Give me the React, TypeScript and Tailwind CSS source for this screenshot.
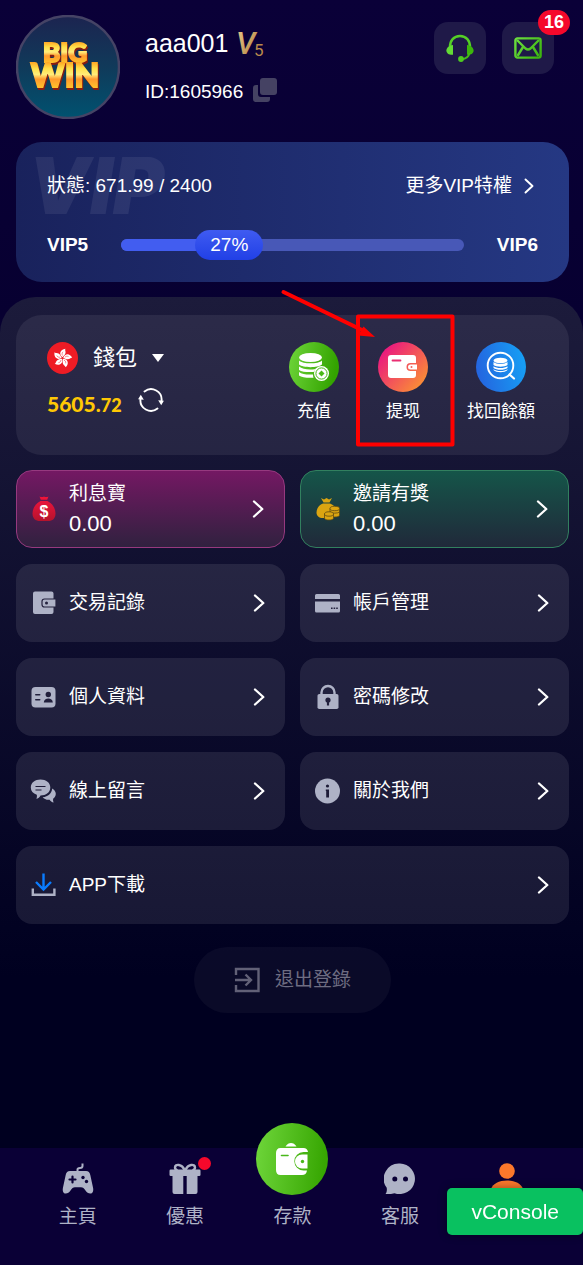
import { useState } from "react";
import type { ReactNode } from "react";

const FONT = "font-['Liberation_Sans','Noto_Sans_CJK_TC',sans-serif]";

function Chevron() {
  return (
    <svg width="12" height="19" viewBox="0 0 12 19" fill="none" className="shrink-0">
      <path d="M2 1.500l8.300 7.500L2 16.500" stroke="#fff" strokeWidth="2.300" strokeLinecap="round" strokeLinejoin="round" />
    </svg>
  );
}

function BigWinLogo() {
  return (
    <svg width="104" height="104" viewBox="0 0 104 104" className="shrink-0">
      <defs>
        <linearGradient id="avatarBg" x1="0" y1="0" x2="0" y2="1">
          <stop offset="0" stopColor="#1c2450" />
          <stop offset="0.5" stopColor="#103a5a" />
          <stop offset="1" stopColor="#005270" />
        </linearGradient>
        <linearGradient id="gold" x1="0" y1="0" x2="0" y2="1">
          <stop offset="0.15" stopColor="#ff9a1c" />
          <stop offset="0.35" stopColor="#ffe14a" />
          <stop offset="0.5" stopColor="#ffec7a" />
          <stop offset="0.62" stopColor="#ff9a2e" />
          <stop offset="0.85" stopColor="#ffc42b" />
        </linearGradient>
      </defs>
      <circle cx="52" cy="52" r="51" fill="url(#avatarBg)" stroke="#454365" strokeWidth="2.500" />
      <g
        fontFamily="Lato, sans-serif"
        fontWeight="900"
        textAnchor="middle"
        fill="url(#gold)"
        stroke="url(#gold)"
        strokeWidth="2"
        className="drop-shadow-[1px_2px_0_#8a1d10]"
      >
        <text x="49" y="47" fontSize="26">BIG</text>
        <text x="49" y="72" fontSize="32">WIN</text>
      </g>
    </svg>
  );
}

function LevelMark() {
  return (
    <svg width="30" height="30" viewBox="0 0 30 30">
      <defs>
        <linearGradient id="bronze" x1="0" y1="0" x2="1" y2="1">
          <stop offset="0" stopColor="#efce8f" />
          <stop offset="1" stopColor="#a87836" />
        </linearGradient>
      </defs>
      <text x="0" y="26" fontSize="31" fontWeight="500" fontStyle="italic" fontFamily="Roboto, sans-serif" fill="url(#bronze)">V</text>
      <text x="18" y="28" fontSize="17" fontFamily="Roboto, sans-serif" fill="#b98a4c">5</text>
    </svg>
  );
}

function CopyIcon() {
  return (
    <svg width="24" height="25" viewBox="0 0 24 25" fill="#454263">
      <rect x="7" y="0" width="17" height="17" rx="3" />
      <path d="M5 7H3a3 3 0 0 0-3 3v11a3 3 0 0 0 3 3h11a3 3 0 0 0 3-3v-2H8a3 3 0 0 1-3-3z" />
    </svg>
  );
}

function HeadsetIcon() {
  return (
    <svg width="28" height="28" viewBox="0 0 28 28">
      <path d="M4 13.500C3.600 6.500 8 2 14 2s10.400 4.500 10 11.500" fill="none" stroke="#55cf26" strokeWidth="2.400" />
      <path d="M7 11v9.700C3 21 .4 19.200.4 16.400c0-2.300 2.400-5 6.600-5.400z" fill="#63dc35" />
      <path d="M21 11v9.700c4 .3 6.600-1.500 6.600-4.300 0-2.300-2.400-5-6.600-5.400z" fill="#3cb60c" />
      <path d="M23.500 19c-.6 3.500-3.500 5.800-8 6.300" fill="none" stroke="#45be16" strokeWidth="1.800" />
      <circle cx="15" cy="25" r="2.900" fill="#4ecb20" />
    </svg>
  );
}

function MailIcon() {
  return (
    <svg width="28" height="22" viewBox="0 0 28 22" fill="none" stroke="url(#mailGreen)" strokeWidth="2.400" strokeLinejoin="round">
      <defs>
        <linearGradient id="mailGreen" gradientUnits="userSpaceOnUse" x1="0" y1="0" x2="28" y2="22">
          <stop offset="0" stopColor="#6fe142" />
          <stop offset="1" stopColor="#37b00a" />
        </linearGradient>
      </defs>
      <rect x="1.400" y="1.400" width="25.200" height="19.200" rx="2" />
      <path d="M3 3l8.500 8.500q2.500 2 5 0L25 3M3.500 19l5.500-9M24.500 19L19 10" />
    </svg>
  );
}

function HongKongFlag() {
  return (
    <svg width="31" height="32" viewBox="0 0 31 32">
      <ellipse cx="15.500" cy="16" rx="15.500" ry="16" fill="#ee1c25" />
      {[10, 82, 154, 226, 298].map((angle) => (
        <g key={angle} transform={`rotate(${angle} 15.500 16)`}>
          <path d="M15.300 15.200C11 13 11.500 8 16.800 6.300c-1 2.200 3.200 3.200-1.500 8.900z" fill="#fff" />
          <path d="M15.100 13.500c-1-1.200-1-2.500-.1-3.700" fill="none" stroke="#ee1c25" strokeWidth=".5" />
        </g>
      ))}
    </svg>
  );
}

function RefreshIcon() {
  return (
    <svg width="26" height="24" viewBox="0 0 26 24">
      <g fill="none" stroke="#fff" strokeWidth="1.900" strokeLinecap="round">
        <path d="M6.500 3.500A10.500 10.500 0 0 1 23.500 13" />
        <path d="M19.500 20.500A10.500 10.500 0 0 1 2.500 11" />
      </g>
      <path d="M20.200 12.300l5.700.4-2.700 4.600zM5.800 11.700l-5.700-.4 2.700-4.600z" fill="#fff" />
    </svg>
  );
}

function DepositIcon() {
  return (
    <svg width="50" height="50" viewBox="0 0 50 50">
      <defs>
        <linearGradient id="depositBg" x1="0" x2="1" y1="0" y2="0.200">
          <stop offset="0" stopColor="#70d63b" />
          <stop offset="1" stopColor="#33a300" />
        </linearGradient>
      </defs>
      <circle cx="25" cy="25" r="25" fill="url(#depositBg)" />
      <g fill="#fff">
        <ellipse cx="21.500" cy="15.500" rx="11.500" ry="4.500" />
        <path d="M10 18.500c4 3.800 19 3.800 23 0v4c-4 3.500-19 3.500-23 0z" />
        <path d="M10 24.500c4 3.500 14 3.800 19 1.700-3 1.500-4 3-4.300 3.700-5 .6-12 0-14.700-2z" />
        <path d="M10 30c3 2.300 9 3 14 2.400 0 1.500.3 2.500.6 3.300-6 .5-12-.3-14.600-2.200z" />
        <circle cx="32.500" cy="31.500" r="7.500" />
      </g>
      <circle cx="32.500" cy="31.500" r="5.600" fill="none" stroke="#48b816" strokeWidth="1" />
      <path d="M32.500 28.500l3 3-3 3-3-3z" fill="#48b816" />
    </svg>
  );
}

function WithdrawIcon() {
  return (
    <svg width="50" height="50" viewBox="0 0 50 50">
      <defs>
        <linearGradient id="withdrawBg" x1="0.100" y1="0.200" x2="0.900" y2="0.900">
          <stop offset="0" stopColor="#ea1a7e" />
          <stop offset="1" stopColor="#fb9233" />
        </linearGradient>
      </defs>
      <circle cx="25" cy="25" r="25" fill="url(#withdrawBg)" />
      <path d="M13 13h22a3 3 0 0 1 3 3v5h-5.500a4 4 0 0 0 0 8H38v4a3 3 0 0 1-3 3H13a3 3 0 0 1-3-3V16a3 3 0 0 1 3-3z" fill="#fff" />
      <path d="M14.500 18.500h8" stroke="#ea2f72" strokeWidth="1.800" strokeLinecap="round" />
      <path d="M32.500 22.500h6.500v5h-6.500a2.500 2.500 0 0 1 0-5z" fill="#fff" />
      <circle cx="33.500" cy="25" r="1" fill="#f4635a" />
    </svg>
  );
}

function RecoverIcon() {
  return (
    <svg width="50" height="50" viewBox="0 0 50 50">
      <defs>
        <linearGradient id="recoverBg" x1="0" x2="1" y1="0.500" y2="0.300">
          <stop offset="0" stopColor="#2465df" />
          <stop offset="1" stopColor="#16a0f5" />
        </linearGradient>
      </defs>
      <circle cx="25" cy="25" r="25" fill="url(#recoverBg)" />
      <circle cx="24.500" cy="23.500" r="12.800" fill="none" stroke="#fff" strokeWidth="1.900" />
      <path d="M33.500 32.500l4.500 4" stroke="#fff" strokeWidth="2.200" strokeLinecap="round" />
      <g fill="#fff">
        <ellipse cx="24.500" cy="18.500" rx="7" ry="2.800" />
        <path d="M17.500 20c3 2.500 11 2.500 14 0v3c-3 2.300-11 2.300-14 0z" />
        <path d="M17.500 24.300c3 2.400 11 2.400 14 0v1.600c-3 2.400-11 2.400-14 0z" />
        <path d="M17.500 27.300c3 2.400 11 2.400 14 0v.8c-3 3-11 3-14 0z" />
      </g>
    </svg>
  );
}

function MoneyBagIcon() {
  return (
    <svg width="28" height="28" viewBox="0 0 28 28">
      <defs>
        <linearGradient id="bagRed" x1="0" y1="0" x2="0" y2="1">
          <stop offset="0" stopColor="#e8143c" />
          <stop offset="1" stopColor="#b5132c" />
        </linearGradient>
      </defs>
      <path d="M9.500 1.500q2.500 1 4.500 0 2 1 4.500 0l-1.300 3.300h-6.400z" fill="#ee1438" />
      <path d="M10.500 6h7c5 2.500 8 7.500 8 12.500 0 5-3 7.500-7.500 7.500h-8c-4.500 0-7.500-2.500-7.500-7.500 0-5 3-10 8-12.500z" fill="url(#bagRed)" />
      <text x="14" y="22" fontSize="16" fontWeight="700" textAnchor="middle" fontFamily="Liberation Sans, sans-serif" fill="#fff">$</text>
    </svg>
  );
}

function GoldBagIcon() {
  return (
    <svg width="28" height="28" viewBox="0 0 28 28">
      <path d="M7 3l3 1.500L12.500 3 15 4.500 18 3l-2.500 4.500h-6zM9 8.500h7c4 1.800 6.500 4.500 7 7.500l-6 3-2.500 4H9c-4 0-6.500-2-6.500-5.500C2.500 13.500 5 10 9 8.500z" fill="#dba511" />
      <g fill="#dba511" stroke="#5e4a12" strokeWidth=".8">
        <path d="M16 13.500v7c1.500 2 8 2 9.500 0v-7z" />
        <ellipse cx="20.750" cy="13.500" rx="4.750" ry="2.200" />
        <path d="M16 17c1.500 1.500 8 1.500 9.500 0" fill="none" />
        <path d="M10.500 19v4.500c1.500 2 7.500 2 9 0V19z" />
        <ellipse cx="15" cy="19" rx="4.500" ry="2.200" />
      </g>
    </svg>
  );
}

function RecordsIcon() {
  return (
    <svg width="28" height="28" viewBox="0 0 28 28">
      <path d="M5 2.500h16.500a2 2 0 0 1 2 2V23a2 2 0 0 1-2 2H5a2 2 0 0 1-2-2V4.500a2 2 0 0 1 2-2z" fill="#aeb2c6" />
      <path d="M14.500 10H26v8H14.500a2.500 2.500 0 0 1-2.500-2.500v-3a2.500 2.500 0 0 1 2.500-2.500z" fill="#aeb2c6" stroke="#25233f" strokeWidth="1.200" />
      <circle cx="16.500" cy="14" r="1.500" fill="#25233f" />
    </svg>
  );
}

function CardIcon() {
  return (
    <svg width="28" height="28" viewBox="0 0 28 28">
      <path d="M3.500 5h21A1.500 1.500 0 0 1 26 6.500V10H1V6.500A1.500 1.500 0 0 1 2.500 5zM1 12.500h25V22a1.500 1.500 0 0 1-1.500 1.500h-22A1.500 1.500 0 0 1 1 22z" fill="#aeb2c6" />
      <path d="M17 19.200h1.600M19.600 19.200h1.600M22.200 19.200h1.600" stroke="#25233f" strokeWidth="1.600" />
    </svg>
  );
}

function ProfileIcon() {
  return (
    <svg width="28" height="28" viewBox="0 0 28 28">
      <rect x="1.500" y="4" width="24" height="20.500" rx="4" fill="#aeb2c6" />
      <g fill="#211f3c">
        <circle cx="18.300" cy="11.500" r="2.700" />
        <path d="M13.800 19.500c0-5.500 9-5.500 9 0z" />
        <rect x="5" y="11" width="5.500" height="1.600" rx=".8" />
        <rect x="5" y="16" width="5.500" height="1.600" rx=".8" />
      </g>
    </svg>
  );
}

function LockIcon() {
  return (
    <svg width="28" height="28" viewBox="0 0 28 28">
      <path d="M7.500 12V9.500a6.500 6.500 0 0 1 13 0V12" fill="none" stroke="#aeb2c6" strokeWidth="2.400" />
      <rect x="3.500" y="11" width="21" height="15" rx="1.800" fill="#aeb2c6" />
      <circle cx="14" cy="17" r="2.600" fill="#211f3c" />
      <path d="M12.900 18h2.200v4.500h-2.200z" fill="#211f3c" />
    </svg>
  );
}

function MessagesIcon() {
  return (
    <svg width="28" height="28" viewBox="0 0 28 28" fill="#aeb2c6">
      <path d="M10.500 2.500c5.500 0 9.800 3.200 9.800 8s-4.300 8-9.800 8c-.7 1.700-2.500 3-4.200 3.300.6-1 .8-2.500.5-4C3 16.500.8 14 .8 10.500c0-4.800 4.200-8 9.700-8z" />
      <path d="M22.200 11.500c2 1 3.600 3 3.600 5.300 0 2-1 3.800-2.700 4.900-.2 1.500 0 2.700.5 3.800-1.700-.3-3.200-1.300-4-2.800-3 .3-5.500-.7-7-2.500 5.600-.3 9.200-4 9.600-8.700z" />
      <path d="M5.500 9.500h10M5.500 13h6" stroke="#1d1b37" strokeWidth="1.200" />
    </svg>
  );
}

function InfoIcon() {
  return (
    <svg width="28" height="28" viewBox="0 0 28 28">
      <circle cx="13.500" cy="14" r="12.500" fill="#aeb2c6" />
      <circle cx="13.500" cy="9" r="1.600" fill="#1d1b37" />
      <path d="M11.800 12.500h3.200v8h-2.800V14h-.4z" fill="#1d1b37" />
    </svg>
  );
}

function DownloadIcon() {
  return (
    <svg width="28" height="28" viewBox="0 0 28 28" fill="none" strokeWidth="2.400">
      <path d="M13.500 2.500V18M6 11l7.500 7.500L21 11" stroke="#0a7cff" />
      <path d="M2.800 17.500v6.300h21.600v-6.300" stroke="#aeb2c6" />
    </svg>
  );
}

function LogoutIcon() {
  return (
    <svg width="26" height="26" viewBox="0 0 26 26" fill="none" stroke="#626177" strokeWidth="2.400">
      <path d="M2 8V2h22.500v22H2v-6M1 13h15M11.500 7.500l5.500 5.500-5.500 5.500" />
    </svg>
  );
}

function GamepadIcon() {
  return (
    <svg width="32" height="32" viewBox="0 0 32 32">
      <path d="M15.500 10V6.500c0-1.300 1-1.500 2.500-1.500s2.500-.5 2.500-2V.500" fill="none" stroke="#aeb2c6" strokeWidth="2" />
      <path d="M8 8h16c2.500 0 3.700 1.500 4.300 4l2.800 13c.6 3.500-.6 5.500-2.800 5.500-2 0-3.500-1-5-3.300-1.300-2-2.300-3-4.300-3h-6c-2 0-3 1-4.300 3-1.500 2.300-3 3.300-5 3.300-2.200 0-3.400-2-2.800-5.500L3.700 12C4.300 9.500 5.500 8 8 8z" fill="#aeb2c6" />
      <path d="M10.500 13.500v6M7.500 16.500h6" stroke="#0a0036" strokeWidth="2.200" strokeLinecap="round" />
      <circle cx="21" cy="14.500" r="1.700" fill="#0a0036" />
      <circle cx="24.500" cy="18.500" r="1.700" fill="#0a0036" />
    </svg>
  );
}

function GiftIcon() {
  return (
    <svg width="32" height="32" viewBox="0 0 32 32">
      <path d="M15.500 7C13 1 6 .5 6 4.500 6 6 7 7 8.500 7.500M16.500 7c2.500-6 9.500-6.500 9.500-2.500 0 1.500-1 2.500-2.500 3" fill="none" stroke="#aeb2c6" strokeWidth="2.400" />
      <rect x=".5" y="6.500" width="31" height="6.500" rx="1.200" fill="#aeb2c6" />
      <path d="M3.500 12h10.800v19H5.500a2 2 0 0 1-2-2zM17.700 12h10.800v17a2 2 0 0 1-2 2h-8.800z" fill="#aeb2c6" />
    </svg>
  );
}

function ChatIcon() {
  return (
    <svg width="32" height="32" viewBox="0 0 32 32">
      <path d="M16 .5a15.300 15.300 0 1 1-5.500 29.700C7.500 31 4 31.200 1.500 31c1-1 1.700-3.500 1.200-6.200A15.300 15.300 0 0 1 16 .5z" fill="#aeb2c6" />
      <circle cx="10.800" cy="16" r="2.500" fill="#0a0036" />
      <circle cx="21.500" cy="16" r="2.500" fill="#0a0036" />
    </svg>
  );
}

function UserIcon() {
  return (
    <svg width="32" height="32" viewBox="0 0 32 32" fill="#fb782b">
      <circle cx="16" cy="8" r="7.800" />
      <path d="M0 26c2-5.500 8-8.500 16-8.500s14 3 16 8.500v6H0z" />
    </svg>
  );
}

function BigWalletIcon() {
  return (
    <svg width="72" height="72" viewBox="0 0 72 72">
      <defs>
        <linearGradient id="navGreen" x1="0" x2="1" y1="0" y2="0.100">
          <stop offset="0" stopColor="#6fd63b" />
          <stop offset="1" stopColor="#37a602" />
        </linearGradient>
      </defs>
      <circle cx="36" cy="36" r="36" fill="url(#navGreen)" />
      <path d="M29.500 23.500c1.500-2.500 3.500-3.500 5.500-3.500s4 1 5.500 3.500z" fill="#fff" />
      <path d="M24.500 25h23c2.500 0 4 1.200 4.500 4h-4.500a9.200 9.200 0 0 0 0 18.400h3.500c-.5 3-2 4.600-5 4.600h-21.500c-3 0-4.500-2-4.500-5V30c0-3 1.500-5 4.500-5z" fill="#fff" />
      <path d="M46 31.500h5.500v14H46a7 7 0 0 1 0-14z" fill="#fff" />
      <circle cx="46.500" cy="38.500" r="1.700" fill="#49b81b" />
      <path d="M25.500 32.500h6.500" stroke="#49b81b" strokeWidth="1.600" strokeLinecap="round" />
    </svg>
  );
}

const promos = [
  {
    label: "利息寶",
    amount: "0.00",
    icon: <MoneyBagIcon />,
    style: "border-[#96397f] from-[#741863] to-[#30213f]",
  },
  {
    label: "邀請有獎",
    amount: "0.00",
    icon: <GoldBagIcon />,
    style: "border-[#32805f] from-[#155549] to-[#20293a]",
  },
];

const menu = [
  { label: "交易記錄", icon: <RecordsIcon /> },
  { label: "帳戶管理", icon: <CardIcon /> },
  { label: "個人資料", icon: <ProfileIcon /> },
  { label: "密碼修改", icon: <LockIcon /> },
  { label: "線上留言", icon: <MessagesIcon /> },
  { label: "關於我們", icon: <InfoIcon /> },
  { label: "APP下載", icon: <DownloadIcon />, wide: true },
];

function WalletAction({ label, icon, children }: { label: string; icon: ReactNode; children?: ReactNode }) {
  return (
    <div className="relative">
      <button type="button" className="flex flex-col items-center gap-2 min-w-[50px]">
        {icon}
        <span className="text-[17px] leading-6 whitespace-nowrap">{label}</span>
      </button>
      {children}
    </div>
  );
}

function Callout() {
  return (
    <svg
      width="176"
      height="160"
      viewBox="0 0 176 160"
      fill="none"
      className="absolute -top-[55px] -left-[98px] pointer-events-none"
    >
      <rect x="78" y="29.500" width="94.500" height="128" stroke="#fe0000" strokeWidth="4" strokeLinejoin="round" />
      <path d="M3.500 5L84 44" stroke="#fe0000" strokeWidth="4" strokeLinecap="round" />
      <path d="M95 50l-17-1.500 5.500-9z" fill="#fe0000" />
    </svg>
  );
}

function NavItem({ label, icon, dot }: { label: string; icon: ReactNode; dot?: boolean }) {
  return (
    <a href="#" className="flex flex-col items-center gap-2 text-[#aeb2c6]">
      <span className="relative">
        {icon}
        {dot && <span className="absolute -top-[6px] -right-[10px] size-[13px] rounded-full bg-[#f5082b]" />}
      </span>
      <span className="text-[19px] leading-7">{label}</span>
    </a>
  );
}

export default function App() {
  const [percent] = useState(27);

  return (
    <div
      className={`${FONT} min-h-screen flex flex-col text-white bg-[#000020] bg-linear-to-b/srgb from-[#0a0038] to-[#000020] to-85%`}
    >
      {/* Profile */}
      <header className="flex items-start pt-[15px] pl-4 pr-[29px]">
        <BigWinLogo />
        <div className="ml-[25px] mt-3 flex-1">
          <div className="flex items-center gap-2">
            <span className="text-[25px] leading-8">aaa001</span>
            <LevelMark />
          </div>
          <div className="mt-[17px] flex items-center gap-[10px]">
            <span className="text-[19px] leading-8">ID:1605966</span>
            <button type="button" aria-label="複製" className="pb-1">
              <CopyIcon />
            </button>
          </div>
        </div>
        <div className="mt-[7px] flex gap-4">
          <button type="button" aria-label="客服" className="size-[52px] rounded-[14px] bg-[#1f1948] flex items-center justify-center">
            <HeadsetIcon />
          </button>
          <button type="button" aria-label="信箱" className="relative size-[52px] rounded-[14px] bg-[#1f1948] flex items-center justify-center">
            <MailIcon />
            <span className="absolute -top-3 -right-4 h-[25px] px-[6px] rounded-full bg-[#f5082b] text-[18px] leading-6 font-bold">
              16
            </span>
          </button>
        </div>
      </header>

      {/* VIP progress */}
      <section className="relative mt-[23px] ml-4 mr-[14px] rounded-[26px] px-[31px] pt-[30px] pb-[22px] bg-linear-to-r/srgb from-[#19225c] to-[#253883]">
        <span
          aria-hidden="true"
          className="absolute top-0 left-3 font-[Inter,sans-serif] text-[78px] leading-[88px] font-black italic text-white/7"
        >
          VIP
        </span>
        <div className="relative flex justify-between text-[19px] leading-7">
          <span>狀態: 671.99 / 2400</span>
          <a href="#" className="flex items-center gap-3 pr-1">
            更多VIP特權
            <svg width="10" height="16" viewBox="0 0 10 16" fill="none">
              <path d="M1.500 1.500L8.500 8l-7 6.500" stroke="#fff" strokeWidth="1.900" strokeLinecap="round" strokeLinejoin="round" />
            </svg>
          </a>
        </div>
        <div className="relative mt-[30px] flex items-center gap-[33px] text-[19px] leading-[30px]">
          <b>VIP5</b>
          <div
            role="progressbar"
            aria-label="VIP"
            aria-valuenow={percent}
            className="relative flex-1 h-3 rounded-full bg-[#4858b7]"
          >
            <div className="h-3 rounded-full bg-[#425df0]" style={{ width: `${percent + 5}%` }} />
            <span
              className="absolute -top-[9px] w-[68px] h-[30px] rounded-full bg-linear-to-b/srgb from-[#3f5bf1] to-[#2140e6] text-center"
              style={{ left: `calc((100% - 68px) * ${percent / 100})` }}
            >
              {percent}%
            </span>
          </div>
          <b>VIP6</b>
        </div>
      </section>

      <main className="mt-[15px] flex-1 rounded-t-[36px] pt-[18px] pl-4 pr-[14px] pb-8 bg-linear-to-b/srgb from-[#1c1b3b] to-[#000020] to-80%">
        {/* Wallet */}
        <section className="flex justify-between rounded-[26px] bg-white/7 pt-[27px] pb-[31px] pl-[31px] pr-[34px]">
          <div>
            <button type="button" className="flex items-center gap-[15px] text-[22px] leading-8">
              <HongKongFlag />
              錢包
              <svg width="12" height="8" viewBox="0 0 12 8">
                <path d="M0 0h12L6 8z" fill="#fff" />
              </svg>
            </button>
            <div className="mt-[14px] flex items-start gap-4">
              <span className="font-[Lato,sans-serif] font-black text-[21px] leading-8 text-[#ffc804]">
                5605.<span className="text-[18px]">72</span>
              </span>
              <button type="button" aria-label="重新整理">
                <RefreshIcon />
              </button>
            </div>
          </div>
          <div className="flex gap-[39px]">
            <WalletAction label="充值" icon={<DepositIcon />} />
            <WalletAction label="提现" icon={<WithdrawIcon />}>
              <Callout />
            </WalletAction>
            <WalletAction label="找回餘額" icon={<RecoverIcon />} />
          </div>
        </section>

        {/* Menu */}
        <div className="mt-[15px] grid grid-cols-2 gap-x-[15px] gap-y-4 text-[19px]">
          {promos.map((p) => (
            <a
              key={p.label}
              href="#"
              className={`flex items-center gap-[11px] h-[78px] pl-[13px] pr-5 rounded-2xl border bg-linear-to-b/srgb ${p.style}`}
            >
              {p.icon}
              <span className="flex-1 flex flex-col leading-[30px]">
                {p.label}
                <span className="text-[22px]">{p.amount}</span>
              </span>
              <Chevron />
            </a>
          ))}
          {menu.map((m) => (
            <a
              key={m.label}
              href="#"
              className={`flex items-center gap-[11px] h-[78px] pl-[14px] pr-5 rounded-2xl bg-white/9 ${m.wide ? "col-span-2" : ""}`}
            >
              {m.icon}
              <span className="flex-1">{m.label}</span>
              <Chevron />
            </a>
          ))}
        </div>

        <button
          type="button"
          className="mx-auto mt-[23px] h-[66px] px-10 flex items-center gap-[15px] rounded-full bg-white/4 text-[19px] text-[#6e6d82]"
        >
          <LogoutIcon />
          退出登錄
        </button>
      </main>

      <nav className="h-[117px] pl-6 pr-[22px] pb-[34px] grid grid-cols-5 items-end bg-[#0a0036]">
        <NavItem label="主頁" icon={<GamepadIcon />} />
        <NavItem label="優惠" icon={<GiftIcon />} dot />
        <a href="#" className="-mt-[42px] flex flex-col items-center gap-2 text-[#aeb2c6]">
          <BigWalletIcon />
          <span className="text-[19px] leading-7">存款</span>
        </a>
        <NavItem label="客服" icon={<ChatIcon />} />
        <a href="#" aria-label="我的" className="flex justify-center pb-9">
          <UserIcon />
        </a>
      </nav>

      <button
        type="button"
        className="fixed right-0 bottom-[30px] h-[47px] px-6 rounded-[5px] bg-[#09c160] text-[21px] shadow-[0_0_8px_rgba(0,0,0,0.4)]"
      >
        vConsole
      </button>
    </div>
  );
}
